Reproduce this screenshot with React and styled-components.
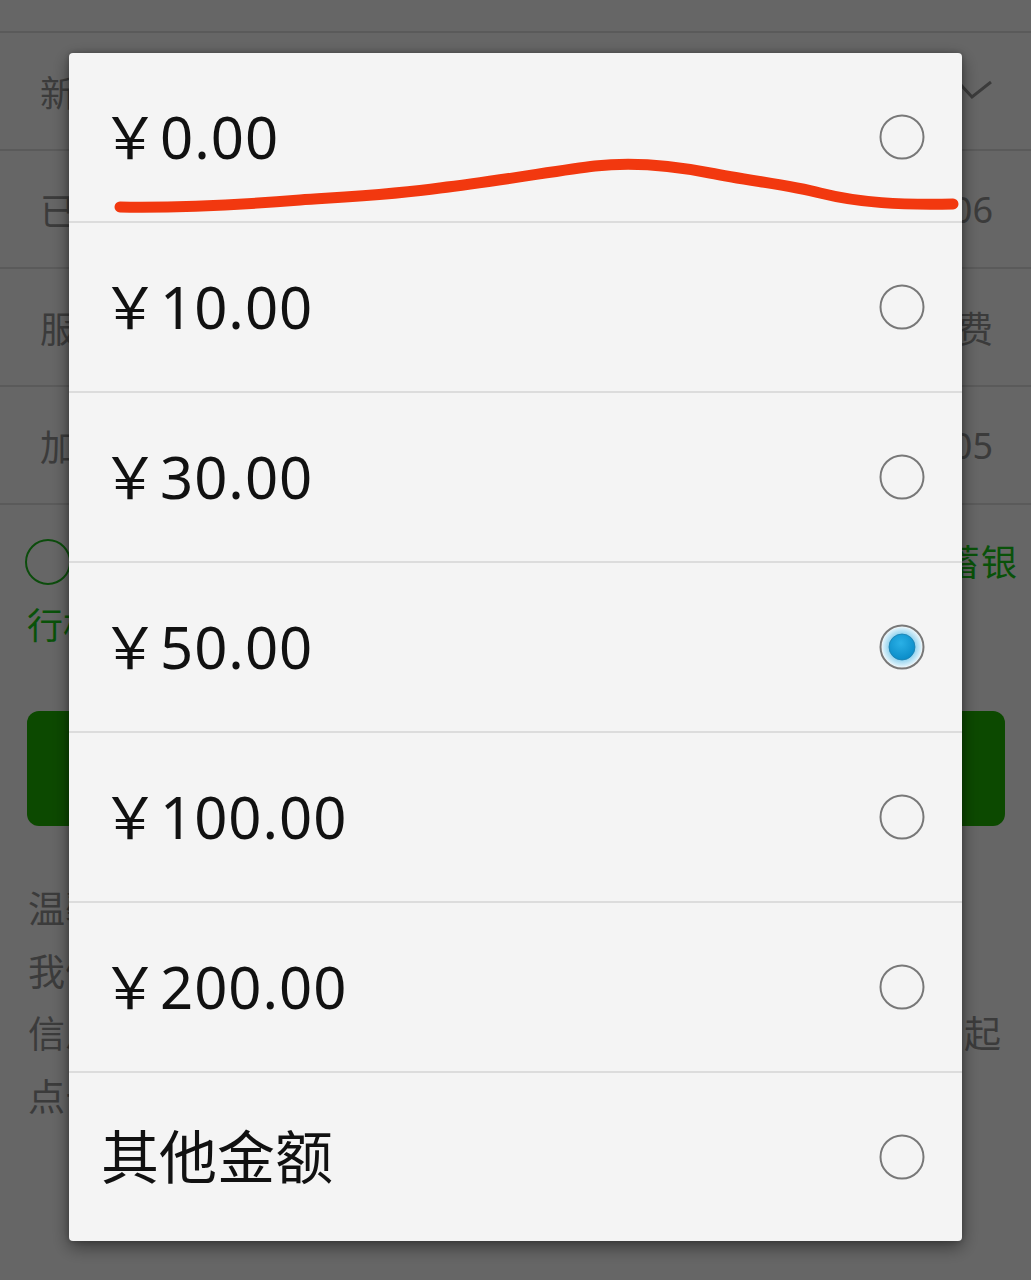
import React from "react";
import styled, { createGlobalStyle } from "styled-components";

const Global = createGlobalStyle`
  html, body { margin: 0; padding: 0; }
  body {
    background: #ffffff;
    font-family: "Noto Sans", "Noto Sans CJK SC", sans-serif;
    overflow: hidden;
  }
`;

const Page = styled.div`
  width: 1031px;
  height: 1280px;
  background: #ffffff;
  font-family: "Noto Sans", "Noto Sans CJK SC", sans-serif;
  color: #959595;
`;

const TopBar = styled.div`
  height: 33px;
  border-bottom: 2px solid #e2e2e2;
  box-sizing: border-box;
`;

const InfoRow = styled.div`
  height: 118px;
  box-sizing: border-box;
  border-bottom: 2px solid #e2e2e2;
  display: flex;
  align-items: center;
  justify-content: space-between;
  padding: 0 38px 0 40px;
  font-size: 36px;
`;

const Agree = styled.p`
  margin: 0;
  padding: 26px 14px 0 27px;
  color: #17cc17;
  font-size: 36px;
  line-height: 63px;
  text-align: justify;
  text-align-last: left;
`;

const AgreeCircle = styled.span`
  display: inline-block;
  vertical-align: middle;
  width: 42px;
  height: 42px;
  margin: -8px 12px 0 -2px;
  border: 2px solid #1fbf1f;
  border-radius: 50%;
`;

const PayButton = styled.div`
  margin: 54px 26px 0 27px;
  height: 115px;
  border-radius: 12px;
  background: #1fb700;
  color: #ffffff;
  font-size: 40px;
  display: flex;
  align-items: center;
  justify-content: center;
`;

const Notes = styled.div`
  padding: 52px 30px 0 28px;
  font-size: 37px;
  line-height: 62.5px;
  color: #959595;
`;

const NoteLine = styled.div`
  display: flex;
  justify-content: space-between;
`;

const Overlay = styled.div`
  position: fixed;
  inset: 0;
  background: rgba(0, 0, 0, 0.6);
`;

const Dialog = styled.div`
  position: fixed;
  left: 69px;
  top: 53px;
  width: 893px;
  background: #f4f4f4;
  border-radius: 4px;
  box-shadow: 0 6px 18px rgba(0, 0, 0, 0.45), 0 0 6px rgba(0, 0, 0, 0.25);
  overflow: hidden;
`;

const Option = styled.div`
  height: 168px;
  display: flex;
  align-items: center;
  justify-content: space-between;
  padding: 0 36px 0 32px;
  border-bottom: ${(p) => (p.$last ? "none" : "2px solid #dcdcdc")};
`;

const OptionLabel = styled.span`
  font-family: "Noto Sans", "Noto Sans CJK SC", sans-serif;
  font-size: 58px;
  letter-spacing: ${(p) => (p.$amount ? "1px" : "0")};
  color: #111111;
  line-height: 1;
`;

const Annotation = styled.svg`
  position: fixed;
  left: 0;
  top: 0;
  width: 1031px;
  height: 1280px;
  pointer-events: none;
`;

const Radio = ({ checked }) => (
  <svg width="48" height="48" viewBox="0 0 48 48">
    <defs>
      <radialGradient id="halo" cx="50%" cy="50%" r="50%">
        <stop offset="55%" stopColor="#7fcbec" />
        <stop offset="100%" stopColor="#e4f4fb" />
      </radialGradient>
      <radialGradient id="dot" cx="45%" cy="35%" r="65%">
        <stop offset="0%" stopColor="#2ab0e6" />
        <stop offset="100%" stopColor="#0a8cc8" />
      </radialGradient>
    </defs>
    {checked && <circle cx="24" cy="24" r="20" fill="url(#halo)" />}
    <circle cx="24" cy="24" r="21.5" fill="none" stroke="#787878" strokeWidth="2" />
    {checked && <circle cx="24" cy="24" r="13" fill="url(#dot)" stroke="#1a7fae" strokeWidth="0.8" />}
  </svg>
);

const options = [
  { label: "￥0.00", amount: true },
  { label: "￥10.00", amount: true },
  { label: "￥30.00", amount: true },
  { label: "￥50.00", amount: true, checked: true },
  { label: "￥100.00", amount: true },
  { label: "￥200.00", amount: true },
  { label: "其他金额" },
];

const Check = () => (
  <svg width="34" height="22" viewBox="0 0 34 22">
    <path d="M2 5 L13 17 L32 2" fill="none" stroke="#959595" strokeWidth="3" />
  </svg>
);

export default function App() {
  return (
    <>
      <Global />
      <Page>
        <TopBar />
        <InfoRow>
          <span>新用户手机号码</span>
          <Check />
        </InfoRow>
        <InfoRow>
          <span>已绑定银行卡号</span>
          <span>6222 **** **** 0306</span>
        </InfoRow>
        <InfoRow>
          <span>服务类型</span>
          <span>话费充值缴费</span>
        </InfoRow>
        <InfoRow>
          <span>加油卡号</span>
          <span>1000 1132 0000 0105</span>
        </InfoRow>
        <Agree>
          <AgreeCircle />
          我已阅读并同意《快捷支付服务协议》及中国邮政储蓄银行相关条款
        </Agree>
        <PayButton>确认充值</PayButton>
        <Notes>
          <NoteLine>温馨提示：</NoteLine>
          <NoteLine>我们将在充值成功后为您发送短信通知</NoteLine>
          <NoteLine>
            <span>信息如有疑问请联系客服，给您带来不便敬请</span>
            <span>起</span>
          </NoteLine>
          <NoteLine>点击查看更多充值说明</NoteLine>
        </Notes>
      </Page>
      <Overlay />
      <Dialog>
        {options.map((o, i) => (
          <Option key={o.label} $last={i === options.length - 1}>
            <OptionLabel $amount={o.amount}>{o.label}</OptionLabel>
            <Radio checked={o.checked} />
          </Option>
        ))}
      </Dialog>
      <Annotation viewBox="0 0 1031 1280">
        <path
          d="M120 207 C 180 208, 250 204, 300 200 C 360 196, 400 194, 440 188 C 500 181, 560 170, 595 166 C 630 162, 670 165, 710 173 C 750 181, 790 185, 820 193 C 860 203, 900 205, 953 204"
          fill="none"
          stroke="#f2380f"
          strokeWidth="11"
          strokeLinecap="round"
          strokeLinejoin="round"
        />
      </Annotation>
    </>
  );
}
